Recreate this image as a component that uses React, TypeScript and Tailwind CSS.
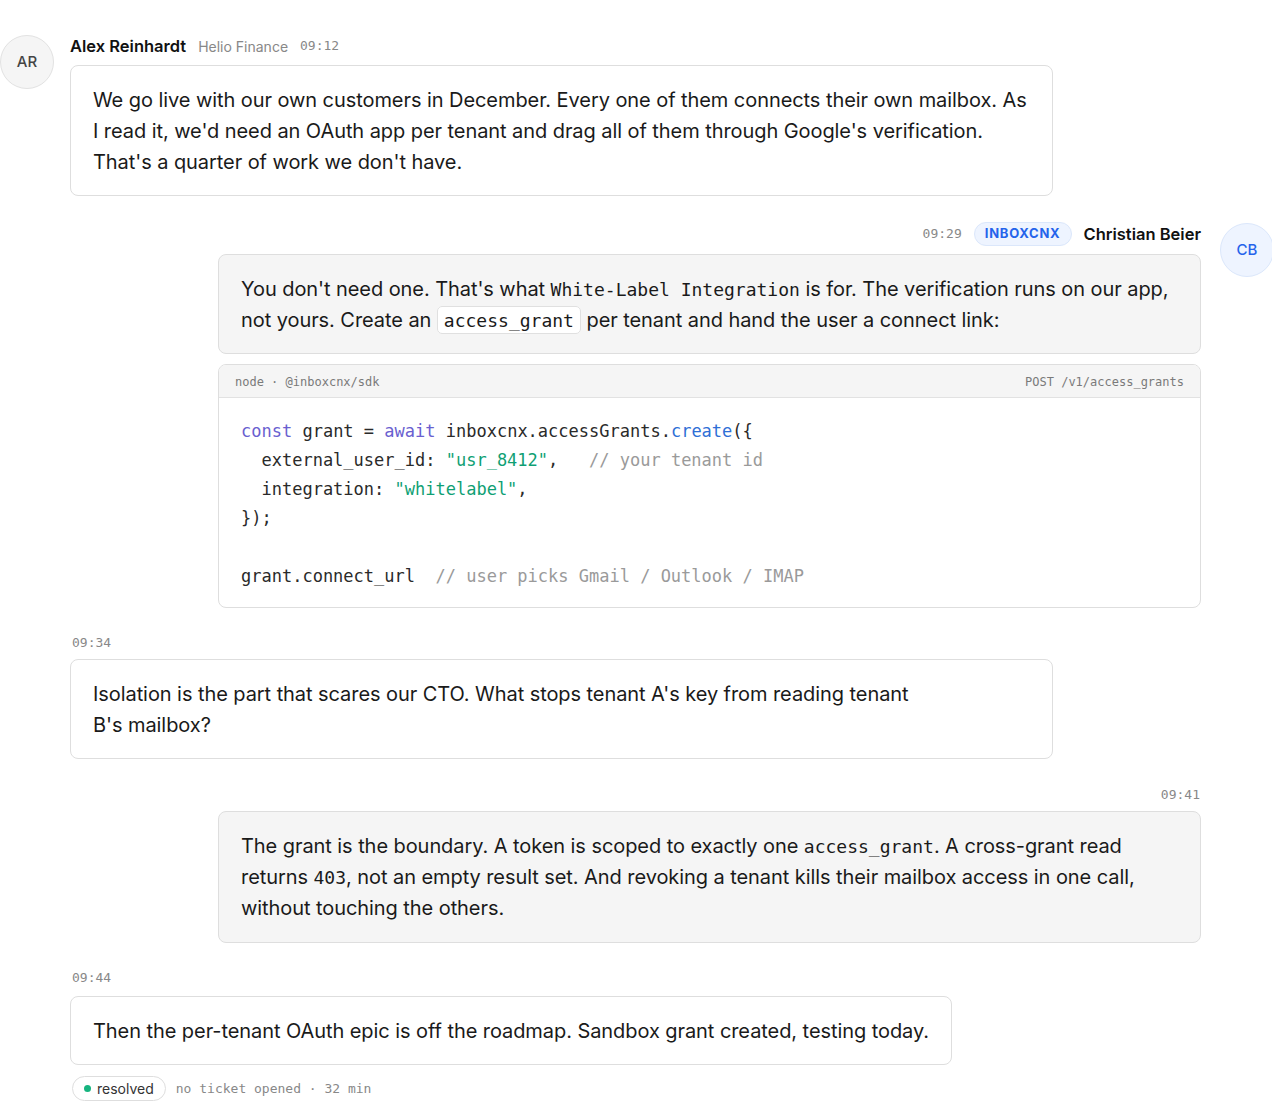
import React from "react";

const sans = "font-['Inter','Liberation_Sans',sans-serif]";
const mono = "font-['DejaVu_Sans_Mono','Liberation_Mono',monospace]";

function Avatar({ initials, me }: { initials: string; me?: boolean }) {
	return (
		<div
			className={
				"flex h-[54px] w-[54px] shrink-0 items-center justify-center rounded-full border text-[15px] font-medium " +
				(me
					? "border-[#dbe7fb] bg-[#eef4ff] text-[#2563eb]"
					: "border-[#e2e2e2] bg-[#f5f5f5] text-[#444]")
			}
		>
			{initials}
		</div>
	);
}

function Stamp({ children }: { children: React.ReactNode }) {
	return <span className={mono + " block text-[13px] leading-[16px] text-[#888]"}>{children}</span>;
}

function Code({ children }: { children: React.ReactNode }) {
	return <span className={mono + " text-[18px] tracking-normal"}>{children}</span>;
}

function Bubble({ children, me, tall }: { children: React.ReactNode; me?: boolean; tall?: boolean }) {
	return (
		<div
			className={
				"w-fit max-w-[983px] rounded-lg border border-[#dedede] px-[22px] pt-[19px] text-[20px] leading-[31px] tracking-[-0.07px] text-[#1a1a1a] text-pretty " +
				(tall ? "pb-[18px] " : "pb-[17px] ") +
				(me ? "bg-[#f5f5f5]" : "bg-white")
			}
		>
			{children}
		</div>
	);
}

function CodeBlock() {
	const kw = "text-[#6a5fd0]";
	const fn = "text-[#2f6fd6]";
	const str = "text-[#0f9f74]";
	const cm = "text-[#9a9a9a]";
	return (
		<div className="w-[983px] overflow-hidden rounded-lg border border-[#dedede] bg-white">
			<div className={mono + " flex h-[33px] items-center justify-between border-b border-[#e2e2e2] bg-[#f5f5f5] px-4 pt-[1px] text-[12px] text-[#7a7a7a]"}>
				<span>node · @inboxcnx/sdk</span>
				<span>POST /v1/access_grants</span>
			</div>
			<pre className={mono + " px-[22px] pt-[19px] pb-[16px] text-[17px] leading-[29px] text-[#2a2a2a]"}>
				<span className={kw}>const</span> grant = <span className={kw}>await</span> inboxcnx.accessGrants.<span className={fn}>create</span>{"({"}
				{"\n"}  external_user_id: <span className={str}>"usr_8412"</span>,   <span className={cm}>// your tenant id</span>
				{"\n"}  integration: <span className={str}>"whitelabel"</span>,
				{"\n"}{"});"}
				{"\n"}
				{"\n"}grant.connect_url  <span className={cm}>// user picks Gmail / Outlook / IMAP</span>
			</pre>
		</div>
	);
}

export default function App() {
	return (
		<div className={sans + " min-h-[1101px] w-[1272px] overflow-hidden bg-white pt-[35px]"}>
			{/* Alex */}
			<div className="flex items-start gap-4">
				<Avatar initials="AR" />
				<div className="flex flex-col gap-2">
					<div className="flex h-[22px] items-center gap-3">
						<span className="text-[16.5px] font-semibold text-[#111]">Alex Reinhardt</span>
						<span className="text-[14px] text-[#888]">Helio Finance</span>
						<Stamp>09:12</Stamp>
					</div>
					<Bubble>
						We go live with our own customers in December. Every one of them connects their own mailbox. As I read it,
						we'd need an OAuth app per tenant and drag all of them through Google's verification. That's a quarter of
						work we don't have.
					</Bubble>
				</div>
			</div>

			{/* Christian */}
			<div className="mt-[27px] mr-[-2px] flex items-start justify-end gap-[19px]">
				<div className="flex w-[983px] flex-col items-end">
					<div className="flex h-[22px] items-center gap-3">
						<Stamp>09:29</Stamp>
						<span className="rounded-full border border-[#dbe7fb] bg-[#eef4ff] px-[10px] py-[1px] text-[13px] font-bold tracking-[0.06em] text-[#2563eb]">
							INBOXCNX
						</span>
						<span className="text-[16.5px] font-semibold text-[#111]">Christian Beier</span>
					</div>
					<div className="mt-[9px]">
						<Bubble me>
							You don't need one. That's what <Code>White-Label Integration</Code> is for. The verification runs on our
							app, not yours. Create an{" "}
							<span className="rounded-[5px] border border-[#e0e0e0] bg-white px-[6px] py-[1px]">
								<Code>access_grant</Code>
							</span>{" "}
							per tenant and hand the user a connect link:
						</Bubble>
					</div>
					<div className="mt-[10px]">
						<CodeBlock />
					</div>
				</div>
				<Avatar initials="CB" me />
			</div>

			{/* Alex follow-up */}
			<div className="mt-[27px] flex flex-col items-start gap-[8px] pl-[70px]">
				<div className="pl-[2px]">
					<Stamp>09:34</Stamp>
				</div>
				<Bubble>
					Isolation is the part that scares our CTO. What stops tenant A's key from reading tenant B's mailbox?
				</Bubble>
			</div>

			{/* Christian follow-up */}
			<div className="mt-[28px] flex flex-col items-end gap-[8px] pr-[71px]">
				<div className="pr-[1px]">
					<Stamp>09:41</Stamp>
				</div>
				<Bubble me tall>
					The grant is the boundary. A token is scoped to exactly one <Code>access_grant</Code>. A cross-grant read
					returns <Code>403</Code>, not an empty result set. And revoking a tenant kills their mailbox access in one call,
					without touching the others.
				</Bubble>
			</div>

			{/* Alex closing */}
			<div className="mt-[27px] flex flex-col items-start gap-[10px] pl-[70px]">
				<div className="pl-[2px]">
					<Stamp>09:44</Stamp>
				</div>
				<Bubble>Then the per-tenant OAuth epic is off the roadmap. Sandbox grant created, testing today.</Bubble>
				<div className="mt-[1px] flex items-center gap-[10px] pl-[2px]">
					<span className="flex h-[25px] items-center gap-[6px] rounded-full border border-[#dedede] px-[11px] text-[14px] text-[#333]">
						<span className="h-[7px] w-[7px] rounded-full bg-[#16b47f]" />
						resolved
					</span>
					<Stamp>no ticket opened · 32 min</Stamp>
				</div>
			</div>
		</div>
	);
}
